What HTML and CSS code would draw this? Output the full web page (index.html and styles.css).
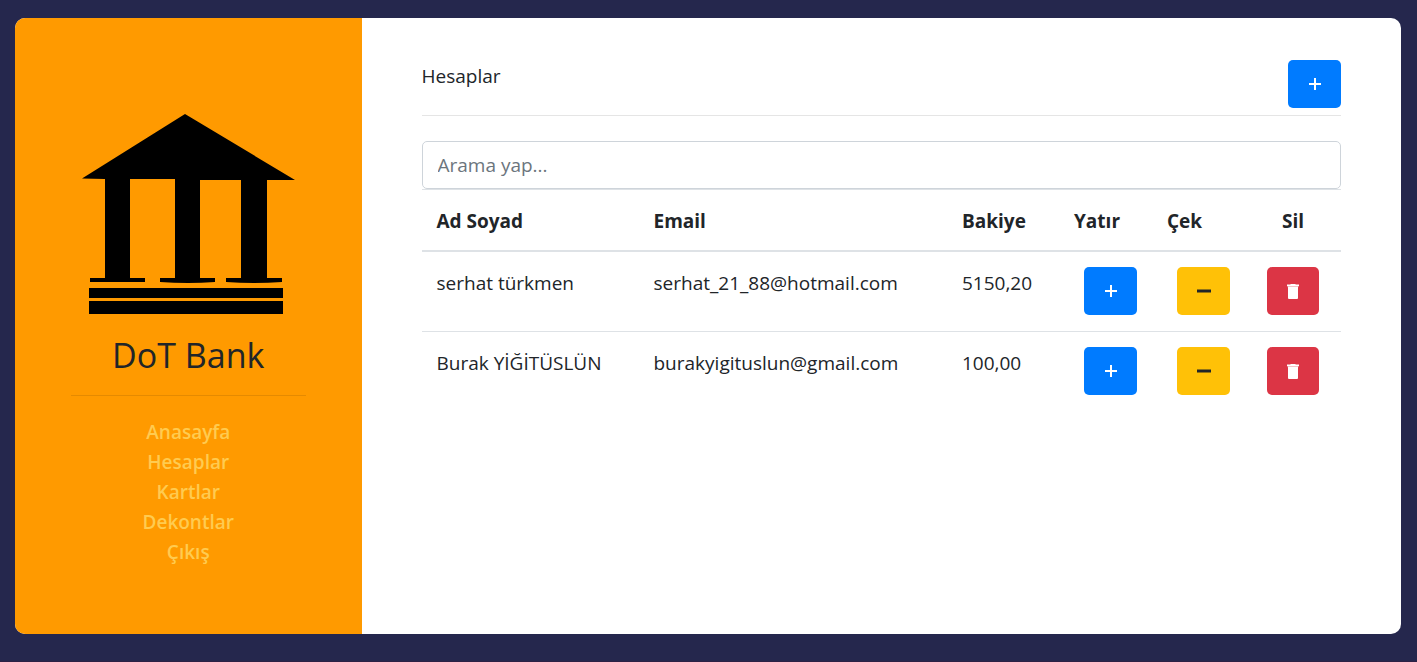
FILE: index.html
```html
<!DOCTYPE html>
<html lang="tr">
<head>
<meta charset="utf-8">
<meta name="viewport" content="width=device-width, initial-scale=1">
<title>DoT Bank</title>
<link rel="stylesheet" href="styles.css">
</head>
<body>
<svg class="defs" aria-hidden="true">
  <symbol id="plus" viewBox="0 0 14 14"><path d="M6 1h2v5h5v2H8v5H6V8H1V6h5z"/></symbol>
  <symbol id="minus" viewBox="0 0 14 14"><path d="M0 5.500h14v3H0z"/></symbol>
  <symbol id="trash" viewBox="0 0 12 15"><path d="M3.500 0h5v.5H12v1.500H0V.5h3.500z"/><path d="M.5 2h11v1.200H.5z" opacity=".7"/><path d="M1 3h10V14q0 1-1 1H2q-1 0-1-1z"/></symbol>
</svg>
<div class="app">
  <aside class="sidebar">
    <svg class="logo" viewBox="-1 0 214 200" role="img" aria-label="DoT Bank">
      <path d="M103 0 213 66H185V164H200V168Q172 170 144 168V164H159V66H118V164H133V168Q106 170 78 168V164H93V65H48V164H63V168H8V164H23V65L0 64.500z"/>
      <path d="M7 174H201V184H7zM7 187H201V200H7z"/>
    </svg>
    <h1 class="brand">DoT Bank</h1>
    <hr class="rule">
    <nav class="menu">
      <a href="#">Anasayfa</a>
      <a href="#">Hesaplar</a>
      <a href="#">Kartlar</a>
      <a href="#">Dekontlar</a>
      <a href="#">Çıkış</a>
    </nav>
  </aside>
  <main class="content">
    <header class="header">
      <span class="title">Hesaplar</span>
      <button class="btn primary" aria-label="Hesap ekle"><svg class="icon"><use href="#plus"/></svg></button>
    </header>
    <input class="search" type="text" placeholder="Arama yap..." aria-label="Arama yap">
    <table class="accounts">
      <colgroup><col class="name"><col class="email"><col class="balance"><col class="action"><col class="action"><col class="remove"></colgroup>
      <thead>
        <tr><th>Ad Soyad</th><th>Email</th><th>Bakiye</th><th>Yatır</th><th>Çek</th><th class="center">Sil</th></tr>
      </thead>
      <tbody>
        <tr>
          <td>serhat türkmen</td><td>serhat_21_88@hotmail.com</td><td>5150,20</td>
          <td class="cell-btn"><button class="btn primary" aria-label="Yatır"><svg class="icon"><use href="#plus"/></svg></button></td>
          <td class="cell-btn"><button class="btn warning" aria-label="Çek"><svg class="icon"><use href="#minus"/></svg></button></td>
          <td class="center"><button class="btn danger" aria-label="Sil"><svg class="icon trash"><use href="#trash"/></svg></button></td>
        </tr>
        <tr>
          <td>Burak YİĞİTÜSLÜN</td><td>burakyigituslun@gmail.com</td><td>100,00</td>
          <td class="cell-btn"><button class="btn primary" aria-label="Yatır"><svg class="icon"><use href="#plus"/></svg></button></td>
          <td class="cell-btn"><button class="btn warning" aria-label="Çek"><svg class="icon"><use href="#minus"/></svg></button></td>
          <td class="center"><button class="btn danger" aria-label="Sil"><svg class="icon trash"><use href="#trash"/></svg></button></td>
        </tr>
      </tbody>
    </table>
  </main>
</div>
</body>
</html>
```
FILE: styles.css
```css
* { box-sizing: border-box; }
body {
  margin: 0;
  min-height: 100vh;
  display: flex;
  padding: 18px 16px 27px 15px;
  border-bottom: 1px solid #2c2145;
  background: #25274d;
  color: #212529;
  font: 400 19px/30px "Open Sans", "Noto Sans", sans-serif;
}
.defs { position: absolute; width: 0; height: 0; }
.app {
  flex: 1;
  display: flex;
  border-radius: 10px;
  overflow: hidden;
  background: #fff;
}
.sidebar {
  flex: 0 0 25%;
  padding: 96px 56px 60px;
  background: #ff9a00;
  display: flex;
  flex-direction: column;
  align-items: center;
}
.logo { width: 214px; height: 200px; display: block; }
.brand {
  margin: 20px 0 19px;
  font-size: 34px;
  font-weight: 500;
  line-height: 42px;
}
.rule {
  width: 100%;
  margin: 0 0 21px;
  border: 0;
  border-top: 1px solid rgba(0, 0, 0, .1);
}
.menu { display: flex; flex-direction: column; align-items: center; }
.menu a {
  color: #ffcb50;
  font-weight: 600;
  text-decoration: none;
}
.content { flex: 1; min-width: 0; padding: 42px 60px; }
.header {
  display: flex;
  justify-content: space-between;
  align-items: flex-start;
  padding-bottom: 7px;
  margin-bottom: 25px;
  border-bottom: 1px solid #e5e5e5;
}
.title { line-height: 32px; }
.btn {
  width: 53px;
  height: 48px;
  padding: 0;
  border: 0;
  border-radius: 5px;
  display: inline-flex;
  align-items: center;
  justify-content: center;
  vertical-align: top;
}
.primary { background: #007bff; color: #fff; }
.warning { background: #ffc107; color: #212529; }
.danger { width: 52px; background: #dc3545; color: #fff; }
.icon { width: 14px; height: 14px; fill: currentColor; }
.trash { width: 12px; height: 15px; }
.search {
  display: block;
  width: 100%;
  height: 48px;
  padding: 8px 15px;
  border: 1px solid #ced4da;
  border-radius: 5px;
  background: #fff;
  color: #495057;
  font: inherit;
}
.search::placeholder { color: #6c757d; opacity: 1; }
.accounts {
  width: 100%;
  table-layout: fixed;
  border-spacing: 0;
  line-height: 32px;
}
.name { width: 217px; }
.balance { width: 112px; }
.action { width: 93px; }
.remove { width: 96px; }
.accounts th, .accounts td {
  padding: 15px 15px 16px;
  border-top: 1px solid #dee2e6;
  text-align: left;
  vertical-align: top;
}
.accounts th { font-weight: 700; padding-bottom: 13px; border-bottom: 2px solid #dee2e6; }
.accounts tbody tr:first-child td { border-top: 0; }
.accounts td:first-child, .accounts th:first-child { padding-right: 0; }
.accounts .cell-btn { padding-left: 25px; }
.accounts .center { text-align: center; }
```
